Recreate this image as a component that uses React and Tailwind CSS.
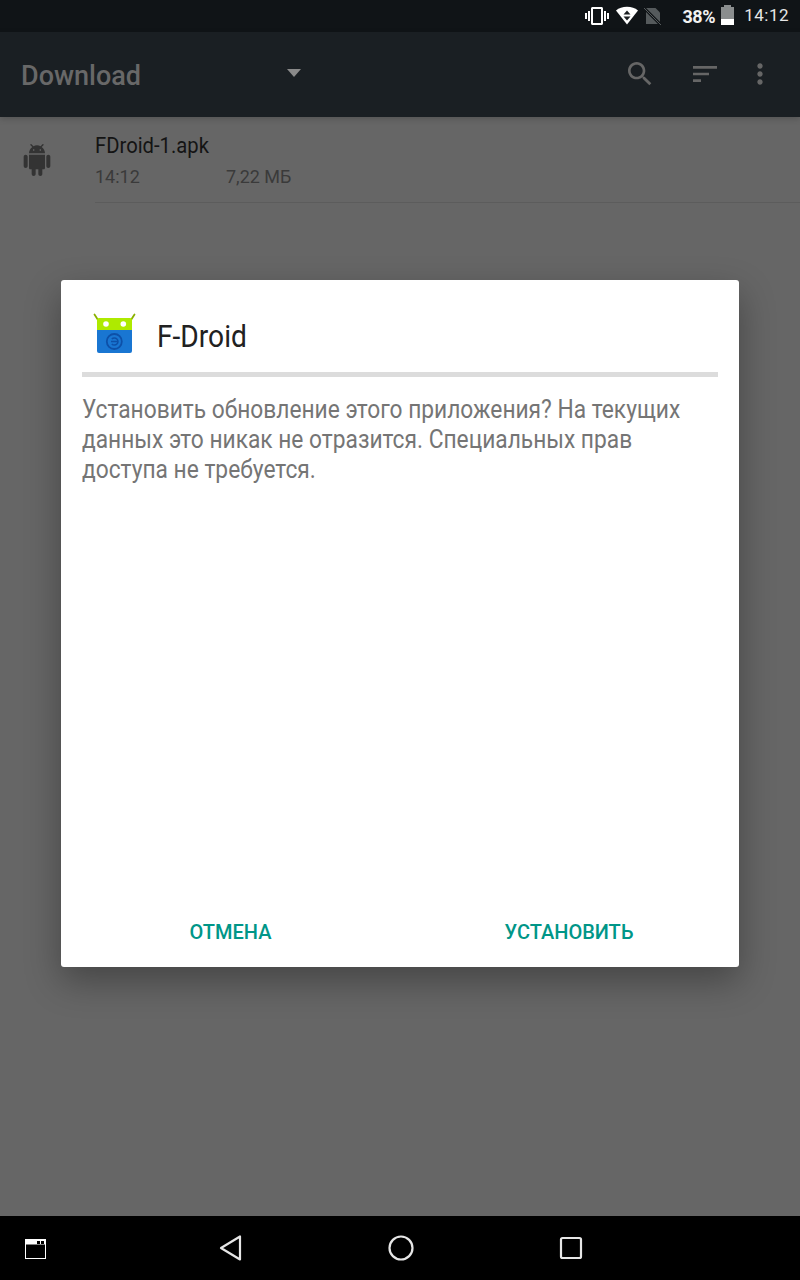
import React from 'react';

const roboto = { fontFamily: 'Roboto, sans-serif' };

function StatusBar() {
  return (
    <div className="h-[32px] bg-[#101417] flex items-center justify-end pr-[11px] text-white">
      {/* Vibrate */}
      <svg width="24" height="24" viewBox="0 0 24 24" className="mr-[6px]" fill="#fff">
        <path d="M0 15h2V9H0v6zm3 2h2V7H3v10zm19-8v6h2V9h-2zm-3 8h2V7h-2v10zM16.500 3h-9C6.670 3 6 3.670 6 4.500v15c0 .83.67 1.500 1.500 1.500h9c.83 0 1.500-.67 1.500-1.500v-15c0-.83-.67-1.500-1.500-1.500zM16 19H8V5h8v14z" />
      </svg>
      {/* Wifi with data arrows */}
      <svg width="24" height="20" viewBox="0 0 24 20" className="mr-[5px]">
        <path d="M1 4.500C4 2 7.500 0.800 12 0.800s8 1.200 11 3.700L12 18.500z" fill="#fff" />
        <path d="M12 4.500l-3.500 4h7z M8.500 10.500h7L12 14.500z" fill="#1a1e21" />
      </svg>
      {/* No SIM */}
      <svg width="20" height="20" viewBox="0 0 20 20" className="mr-[18px]">
        <path d="M2 2h9.500L16 6.500V18H2z" fill="#555a5c" />
        <path d="M0 2l17 17" stroke="#101417" strokeWidth="3" />
        <path d="M0 2l17 17" stroke="#555a5c" strokeWidth="1" />
      </svg>
      <span className="text-[18px] font-bold text-[#f2f2f2] mr-[6px] tracking-[-0.4px]" style={roboto}>38%</span>
      {/* Battery */}
      <div className="w-[13px] h-[20px] mr-[10px] flex flex-col items-center mb-[2px]">
        <div className="w-[7px] h-[2px] bg-[#8a8d8e]" />
        <div className="w-[13px] flex-1 bg-[#8a8d8e] flex flex-col justify-end">
          <div className="h-[6px] bg-white" />
        </div>
      </div>
      <span className="text-[17px] text-[#e6e6e6] tracking-[0.5px]" style={roboto}>14:12</span>
    </div>
  );
}

function Toolbar() {
  return (
    <div className="relative h-[85px] bg-[#1a1f23] flex items-center shadow-[0_2px_6px_rgba(0,0,0,0.18)]">
      <span className="ml-[21px] mt-[3px] w-[265px] text-[27px] leading-none font-medium text-[#686868]" style={roboto}>Download</span>
      <svg width="16" height="8" viewBox="0 0 16 8" className="mb-[3px]"><path d="M1 0h14L8 8z" fill="#8a8a8a" /></svg>
      <div className="flex-1" />
      <svg width="32" height="32" viewBox="0 0 24 24" fill="#666" className="mr-[33px] mb-[2px]">
        <path d="M15.500 14h-.79l-.28-.27C15.410 12.590 16 11.110 16 9.500 16 5.910 13.090 3 9.500 3S3 5.910 3 9.500 5.910 16 9.500 16c1.610 0 3.090-.59 4.230-1.570l.27.28v.79l5 4.990L20.490 19l-4.990-5zm-6 0C7.010 14 5 11.990 5 9.500S7.010 5 9.500 5 14 7.010 14 9.500 11.990 14 9.500 14z" />
      </svg>
      <svg width="32" height="32" viewBox="0 0 24 24" fill="#666" className="mr-[23px] mb-[2px]">
        <path d="M3 6v2h18V6H3zm0 7h12v-2H3v2zm0 5h6v-2H3v2z" />
      </svg>
      <svg width="32" height="32" viewBox="0 0 24 24" fill="#666" className="mr-[24px] mb-[2px]">
        <path d="M12 8c1.100 0 2-.9 2-2s-.9-2-2-2-2 .9-2 2 .9 2 2 2zm0 2c-1.100 0-2 .9-2 2s.9 2 2 2 2-.9 2-2-.9-2-2-2zm0 6c-1.100 0-2 .9-2 2s.9 2 2 2 2-.9 2-2-.9-2-2-2z" />
      </svg>
    </div>
  );
}

function FileRow() {
  return (
    <div className="flex pl-[21px]">
      <svg width="32" height="32" viewBox="0 0 24 24" fill="#333" className="mt-[27px]">
        <path d="M6 18c0 .55.45 1 1 1h1v3.500c0 .83.67 1.500 1.500 1.500s1.500-.67 1.500-1.500V19h2v3.500c0 .83.67 1.500 1.500 1.500s1.500-.67 1.500-1.500V19h1c.55 0 1-.45 1-1V8H6v10zM3.500 8C2.670 8 2 8.670 2 9.500v7c0 .83.67 1.500 1.500 1.500S5 17.330 5 16.500v-7C5 8.670 4.330 8 3.500 8zm17 0c-.83 0-1.500.67-1.500 1.500v7c0 .83.67 1.500 1.500 1.500s1.500-.67 1.500-1.500v-7c0-.83-.67-1.500-1.500-1.500zm-4.970-5.840l1.300-1.300c.2-.2.2-.51 0-.71-.2-.2-.51-.2-.71 0l-1.480 1.480C13.850 1.230 12.950 1 12 1c-.96 0-1.860.23-2.660.63L7.850.15c-.2-.2-.51-.2-.71 0-.2.2-.2.51 0 .71l1.310 1.310C6.970 3.260 6 5.010 6 7h12c0-1.990-.97-3.750-2.470-4.840zM10 5H9V4h1v1zm5 0h-1V4h1v1z" />
      </svg>
      <div className="ml-[42px] flex-1 h-[86px] border-b border-[#5c5c5c]" style={roboto}>
        <div className="mt-[15px] text-[22px] leading-[28px] text-[#141414] origin-left scale-x-[0.92]">FDroid-1.apk</div>
        <div className="mt-[5px] flex text-[18px] leading-[24px] text-[#3a3a3a]">
          <span className="w-[131px]">14:12</span>
          <span>7,22 МБ</span>
        </div>
      </div>
    </div>
  );
}

function FDroidLogo() {
  return (
    <svg width="44" height="44" viewBox="0 0 44 44">
      <path d="M2.500 5.500l4.500 7M42.500 5.500l-4.500 7" stroke="#8ab000" strokeWidth="1.800" strokeLinecap="round" />
      <path d="M5 21v-10a2 2 0 0 1 2-2h31a2 2 0 0 1 2 2v10z" fill="#aeea00" />
      <circle cx="14" cy="15" r="2.800" fill="#fff" />
      <circle cx="31.300" cy="15" r="2.800" fill="#fff" />
      <path d="M5 21h35v21a2 2 0 0 1-2 2H7a2 2 0 0 1-2-2z" fill="#1976d2" />
      <circle cx="22.300" cy="32.500" r="7.500" fill="none" stroke="#0d50a8" strokeWidth="1.800" />
      <path d="M19.800 30a3.600 3.600 0 1 1 0 5M19 32.500h6.500" fill="none" stroke="#0d50a8" strokeWidth="1.500" />
    </svg>
  );
}

function Dialog() {
  return (
    <div className="w-[678px] h-[687px] bg-white rounded-[3px] shadow-[0_14px_36px_rgba(0,0,0,0.33)] flex flex-col" style={roboto}>
      <div className="mx-[21px] h-[97px] border-b-[5px] border-[#dcdcdc] flex items-center">
        <div className="ml-[10px] mt-[10px]"><FDroidLogo /></div>
        <span className="ml-[21px] mt-[20px] text-[32px] leading-none text-[#212121] origin-left scale-x-[0.88]">F-Droid</span>
      </div>
      <p className="mt-[18px] mx-[21px] text-[25px] leading-[30px] text-[#757575] whitespace-nowrap origin-left scale-x-[0.91]">
        Установить обновление этого приложения? На текущих<br />
        данных это никак не отразится. Специальных прав<br />
        доступа не требуется.
      </p>
      <div className="mt-auto h-[70px] flex text-[#009688] text-[20px] font-medium">
        <button className="w-[339px] text-center">ОТМЕНА</button>
        <button className="w-[338px] text-center">УСТАНОВИТЬ</button>
      </div>
    </div>
  );
}

function NavBar() {
  return (
    <div className="h-[64px] bg-black flex items-center">
      <svg width="24" height="24" viewBox="0 0 24 24" className="ml-[24px]" fill="none">
        <rect x="1.500" y="3.500" width="20" height="19" stroke="#fff" strokeWidth="1" />
        <rect x="1.500" y="3.500" width="20" height="5" fill="#fff" />
        <rect x="13" y="5" width="3" height="3" fill="#000" />
        <rect x="17" y="5" width="3" height="3" fill="#000" />
      </svg>
      <svg width="28" height="28" viewBox="0 0 28 28" className="ml-[170px]" fill="none">
        <path d="M3 14L22 2.500v23z" stroke="#e6e6e6" strokeWidth="2.200" strokeLinejoin="round" />
      </svg>
      <svg width="28" height="28" viewBox="0 0 28 28" className="ml-[141px]" fill="none">
        <circle cx="14" cy="14" r="11.500" stroke="#e6e6e6" strokeWidth="2.200" />
      </svg>
      <svg width="28" height="28" viewBox="0 0 28 28" className="ml-[142px]" fill="none">
        <rect x="4" y="4" width="20" height="20" rx="1.500" stroke="#e6e6e6" strokeWidth="2.200" />
      </svg>
    </div>
  );
}

export default function App() {
  return (
    <div className="relative w-[800px] h-[1280px] flex flex-col bg-[#666666] overflow-hidden">
      <StatusBar />
      <Toolbar />
      <div className="flex-1">
        <FileRow />
      </div>
      <NavBar />

      {/* Dialog over the dimmed list */}
      <div className="absolute inset-x-0 top-[32px] bottom-[65px] flex items-center justify-center">
        <Dialog />
      </div>
    </div>
  );
}
